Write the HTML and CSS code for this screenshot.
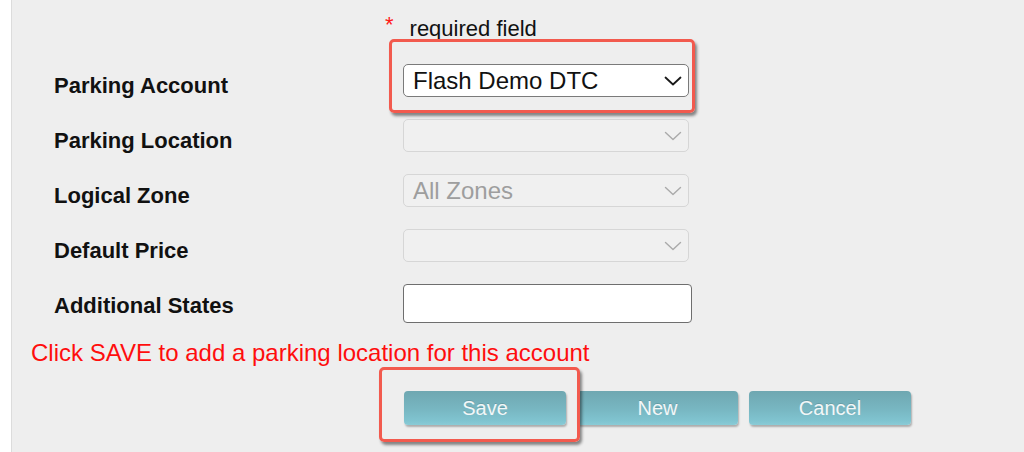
FILE: index.html
```html
<!DOCTYPE html>
<html lang="en">
<head>
<meta charset="utf-8">
<title>Parking Account</title>
<link rel="stylesheet" href="styles.css">
</head>
<body>
<div class="panel">
  <div class="req"><span class="star">*</span><span>required field</span></div>

  <div class="row">
    <div class="label">Parking Account</div>
    <div class="select">
      <span class="value">Flash Demo DTC</span>
      <svg class="chev" width="18" height="10" viewBox="0 0 18 10"><path d="M1.5 1.5 L9 8.5 L16.5 1.5" fill="none" stroke="#1a1a1a" stroke-width="1.8" stroke-linecap="round" stroke-linejoin="round"/></svg>
    </div>
  </div>

  <div class="row">
    <div class="label">Parking Location</div>
    <div class="select disabled">
      <span class="value"></span>
      <svg class="chev" width="18" height="10" viewBox="0 0 18 10"><path d="M1.5 1.5 L9 8.5 L16.5 1.5" fill="none" stroke="#aaa" stroke-width="1.4" stroke-linecap="round" stroke-linejoin="round"/></svg>
    </div>
  </div>

  <div class="row">
    <div class="label">Logical Zone</div>
    <div class="select disabled">
      <span class="value">All Zones</span>
      <svg class="chev" width="18" height="10" viewBox="0 0 18 10"><path d="M1.5 1.5 L9 8.5 L16.5 1.5" fill="none" stroke="#aaa" stroke-width="1.4" stroke-linecap="round" stroke-linejoin="round"/></svg>
    </div>
  </div>

  <div class="row">
    <div class="label">Default Price</div>
    <div class="select disabled">
      <span class="value"></span>
      <svg class="chev" width="18" height="10" viewBox="0 0 18 10"><path d="M1.5 1.5 L9 8.5 L16.5 1.5" fill="none" stroke="#aaa" stroke-width="1.4" stroke-linecap="round" stroke-linejoin="round"/></svg>
    </div>
  </div>

  <div class="row">
    <div class="label">Additional States</div>
    <div class="input"></div>
  </div>

  <div class="hint">Click SAVE to add a parking location for this account</div>

  <div class="buttons">
    <button class="btn btn-save">Save</button>
    <button class="btn btn-new">New</button>
    <button class="btn btn-cancel">Cancel</button>
  </div>

  <div class="mark mark-select"></div>
  <div class="mark mark-save"></div>
</div>
</body>
</html>
```

FILE: styles.css
```css
html, body {
  margin: 0;
  padding: 0;
  background: #ffffff;
}

body {
  font-family: "Liberation Sans", Arial, Helvetica, sans-serif;
  color: #111;
  padding-left: 11px;
}

.panel {
  position: relative;
  height: 452px;
  box-sizing: border-box;
  background: #eeeeee;
  border-left: 1px solid #dcdcdc;
}

.req {
  height: 64px;
  box-sizing: border-box;
  padding: 18px 0 0 373px;
  font-size: 22px;
  line-height: 22px;
  color: #111;
  display: flex;
  align-items: flex-start;
}

.star {
  color: #ff1a1a;
  margin-right: 16px;
  position: relative;
  top: -4px;
}

.row {
  display: flex;
  align-items: flex-start;
  height: 55px;
}

.label {
  width: 391px;
  flex: none;
  box-sizing: border-box;
  padding: 9px 0 0 42px;
  font-weight: bold;
  font-size: 22px;
  line-height: 26px;
  color: #111;
}

.select {
  width: 286px;
  height: 33px;
  box-sizing: border-box;
  border: 1px solid #7a7a7a;
  border-radius: 5px;
  background: #ffffff;
  display: flex;
  align-items: center;
  justify-content: space-between;
  padding: 0 6px 0 9px;
  font-size: 24px;
  color: #111;
}

.select.disabled {
  background: #f0f0f0;
  border-color: #d6d6d6;
  color: #9e9e9e;
}

.value {
  white-space: nowrap;
}

.chev {
  display: block;
  flex: none;
}

.input {
  width: 289px;
  height: 39px;
  box-sizing: border-box;
  border: 1px solid #6e6e6e;
  border-radius: 4px;
  background: #ffffff;
}

.hint {
  padding-left: 19px;
  font-size: 24px;
  line-height: 28px;
  color: #ff0d0d;
  white-space: nowrap;
}

.buttons {
  display: flex;
  gap: 11px;
  padding-left: 392px;
  margin-top: 24px;
}

.btn {
  height: 34px;
  box-sizing: border-box;
  border: none;
  border-radius: 4px;
  padding: 0;
  font-family: "Liberation Sans", Arial, Helvetica, sans-serif;
  font-size: 20px;
  color: #f2f7f8;
  text-shadow: 0 -1px 0 rgba(0, 0, 0, 0.12);
  background: linear-gradient(#6fa7b1, #78b7c2 55%, #80c4d0 88%, #8acbd6);
  box-shadow: 1px 2px 2px rgba(0, 0, 0, 0.28);
}

.btn-save { width: 162px; }
.btn-new { width: 161px; }
.btn-cancel { width: 162px; }

.mark {
  position: absolute;
  border: 3px solid #f25a4e;
  border-radius: 5px;
  box-shadow: 2px 3px 3px rgba(0, 0, 0, 0.45);
}

.mark-select {
  left: 377px;
  top: 39px;
  width: 300px;
  height: 68px;
}

.mark-save {
  left: 367px;
  top: 367px;
  width: 195px;
  height: 69px;
}
```
